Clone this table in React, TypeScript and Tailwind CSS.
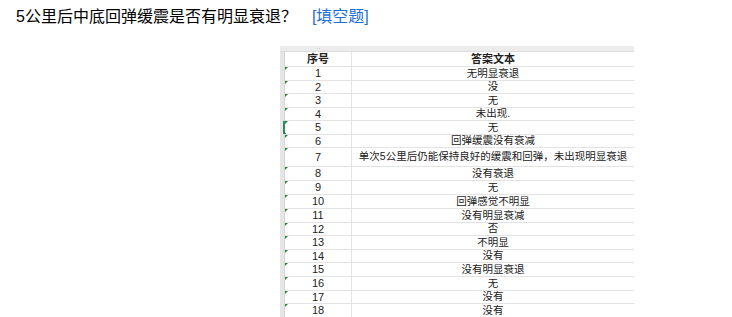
import React from "react";

const rows: { n: number; text: string; h: number }[] = [
  { n: 1, text: "无明显衰退", h: 14 },
  { n: 2, text: "没", h: 13 },
  { n: 3, text: "无", h: 14 },
  { n: 4, text: "未出现.", h: 13 },
  { n: 5, text: "无", h: 14 },
  { n: 6, text: "回弹缓震没有衰减", h: 13 },
  { n: 7, text: "单次5公里后仍能保持良好的缓震和回弹，未出现明显衰退", h: 19 },
  { n: 8, text: "没有衰退", h: 14 },
  { n: 9, text: "无", h: 14 },
  { n: 10, text: "回弹感觉不明显", h: 14 },
  { n: 11, text: "没有明显衰减", h: 14 },
  { n: 12, text: "否", h: 13 },
  { n: 13, text: "不明显", h: 14 },
  { n: 14, text: "没有", h: 13 },
  { n: 15, text: "没有明显衰退", h: 14 },
  { n: 16, text: "无", h: 14 },
  { n: 17, text: "没有", h: 13 },
  { n: 18, text: "没有", h: 14 },
];

const cellFont = {
  fontFamily: '"Liberation Sans", "Noto Sans CJK SC", sans-serif',
};

const App = () => {
  return (
    <div className="w-[732px] h-[317px] overflow-hidden bg-white text-black">
      <div
        className="flex items-center h-[34px] pl-4 text-[16px]"
        style={{ fontFamily: '"Liberation Sans", "Noto Sans CJK SC", sans-serif' }}
      >
        <span>5公里后中底回弹缓震是否有明显衰退？</span>
        <span className="ml-[15px] text-[#1e6fd9]">[填空题]</span>
      </div>

      {/* spreadsheet screenshot */}
      <div className="ml-[280px] mt-[12px] w-[354px] text-[11px] text-[#222]" style={cellFont}>
        <div className="flex h-[6px] bg-[#ececec] border-b border-[#dcdcdc]">
          <div className="w-[5px]" />
          <div className="w-[67px] flex justify-center text-[6px] leading-[4px] text-[#999]">··</div>
          <div className="flex-1 flex justify-center text-[6px] leading-[4px] text-[#999]">·</div>
        </div>
        <div className="flex">
          <div className="w-[5px] bg-[#e6e6e6] border-r border-[#d6d6d6]" />
          <div className="flex-1">
            <div className="flex h-[15px] border-b border-[#e3e3e3]">
              <div className="w-[67px] flex items-center justify-center font-bold border-r border-[#e3e3e3]">序号</div>
              <div className="flex-1 flex items-center justify-center font-bold">答案文本</div>
            </div>
            {rows.map((r) => (
              <div
                key={r.n}
                className="flex border-b border-[#e3e3e3]"
                style={{ height: r.h }}
              >
                <div className="relative w-[67px] flex items-center justify-center border-r border-[#e3e3e3]">
                  <div className="absolute left-0 top-0 w-0 h-0 border-t-[3px] border-r-[3px] border-t-[#1f8a3a] border-r-transparent" />
                  {r.n === 5 && (
                    <div className="absolute left-[-2px] top-0 bottom-0 w-[3px] border-l-2 border-t border-b border-[#2e8b57]" />
                  )}
                  {r.n}
                </div>
                <div className="flex-1 flex items-center justify-center text-[10.5px] whitespace-nowrap">
                  {r.text}
                </div>
              </div>
            ))}
          </div>
        </div>
      </div>
    </div>
  );
};

export default App;
